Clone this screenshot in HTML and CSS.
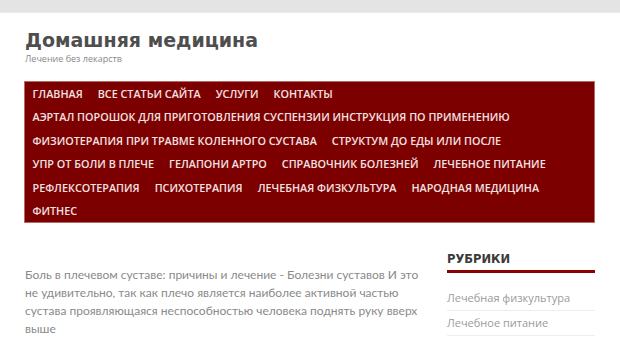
FILE: index.html
```html
<!doctype html>
<html>
  <head>
    <title>Домашняя медицина</title>
    <meta charset="utf-8" />
    <meta name="viewport" content="width=device-width, initial-scale=1.0" />
    <link rel="stylesheet" href="styles.css">
  </head>
  <body>
    <div class="topbar"></div>
    <div class="wrap">
      <header class="site-header">
        <div class="site-title">Домашняя медицина</div>
        <div class="site-desc">Лечение без лекарств</div>
      </header>
      <nav class="main-nav">
        <a href="#">Главная</a>
        <a href="#">Все статьи сайта</a>
        <a href="#">Услуги</a>
        <a href="#">Контакты</a>
        <a href="#">Аэртал порошок для приготовления суспензии инструкция по применению</a>
        <a href="#">Физиотерапия при травме коленного сустава</a>
        <a href="#">Структум до еды или после</a>
        <a href="#">Упр от боли в плече</a>
        <a href="#">Гелапони артро</a>
        <a href="#">Справочник болезней</a>
        <a href="#">Лечебное питание</a>
        <a href="#">Рефлексотерапия</a>
        <a href="#">Психотерапия</a>
        <a href="#">Лечебная физкультура</a>
        <a href="#">Народная медицина</a>
        <a href="#">Фитнес</a>
      </nav>
      <div class="content">
        <main class="main">
          <p>Боль в плечевом суставе: причины и лечение - Болезни суставов И это не удивительно, так как плечо является наиболее активной частью сустава проявляющаяся неспособностью человека поднять руку вверх выше</p>
        </main>
        <aside class="sidebar">
          <h3 class="widget-title">Рубрики</h3>
          <ul class="cats">
            <li><a href="#">Лечебная физкультура</a></li>
            <li><a href="#">Лечебное питание</a></li>
            <li><a href="#">Народная медицина</a></li>
          </ul>
        </aside>
      </div>
    </div>
  </body>
</html>
```

FILE: styles.css
```css
* {
  box-sizing: border-box;
}

body {
  margin: 0;
  padding: 0;
  background: #fff;
  font-family: "Open Sans", sans-serif;
  color: #777;
}

a {
  text-decoration: none;
  color: inherit;
}

.topbar {
  height: 13px;
  background: #e4e4e4;
  border-bottom: 1px solid #ececec;
}

.wrap {
  width: 571px;
  margin: 0 auto 0 24px;
}

.site-header {
  padding-top: 15px;
  height: 68px;
}

.site-title {
  font-family: "DejaVu Sans", sans-serif;
  font-weight: bold;
  font-size: 19px;
  line-height: 24px;
  color: #4e4e4e;
  padding-left: 1px;
}

.site-desc {
  margin-top: 0;
  padding-left: 1px;
  font-size: 9px;
  color: #888;
}

.main-nav {
  display: flex;
  flex-wrap: wrap;
  background: #7d0000;
  border: 1px solid #b06a6a;
  padding: 0 0 0 0;
}

.main-nav a {
  display: block;
  padding: 0 7.5px;
  line-height: 23.4px;
  font-size: 10.8px;
  font-weight: 600;
  text-transform: uppercase;
  color: #f3e2e2;
}

.content {
  display: flex;
  justify-content: space-between;
  padding-top: 29px;
  padding-left: 1px;
}

.main {
  width: 398px;
}

.main p {
  margin: 14px 0 0;
  font-family: Lato, sans-serif;
  font-size: 12px;
  line-height: 17.7px;
  color: #8a8a8a;
}

.sidebar {
  width: 148px;
}

.widget-title {
  margin: 0;
  font-family: "DejaVu Sans", sans-serif;
  font-size: 11.5px;
  font-weight: bold;
  text-transform: uppercase;
  color: #3a3a3a;
  padding-bottom: 4px;
  border-bottom: 3px solid #8b0000;
}

.cats {
  list-style: none;
  margin: 13px 0 0;
  padding: 0;
}

.cats li {
  font-size: 11px;
  line-height: 16px;
  padding: 4px 0;
  border-bottom: 1px solid #eee;
  color: #9a9a9a;
}
```
